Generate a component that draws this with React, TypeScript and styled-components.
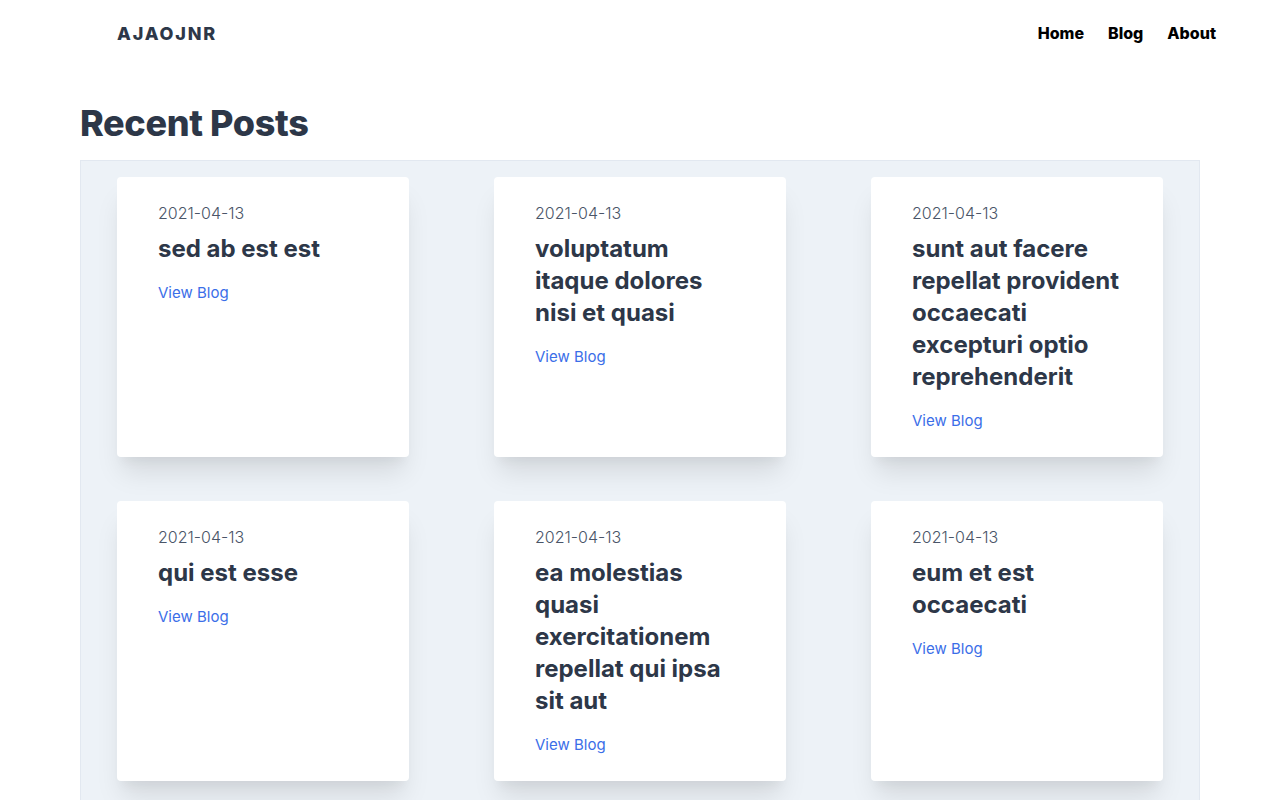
import React from "react";
import styled, { createGlobalStyle } from "styled-components";

const Global = createGlobalStyle`
  html, body { margin: 0; padding: 0; background: #fff; }
  body { font-family: Inter, "Noto Sans", sans-serif; -webkit-font-smoothing: antialiased; }
  * { box-sizing: border-box; }
`;

const Header = styled.header`
  display: flex;
  align-items: center;
  justify-content: space-between;
  height: 66px;
  padding: 0 64px 0 117px;
`;

const Logo = styled.a`
  font-size: 18px;
  font-weight: 800;
  letter-spacing: 0.1em;
  color: #2d3748;
  text-decoration: none;
`;

const Nav = styled.nav`
  display: flex;
  gap: 24px;
`;

const NavLink = styled.a`
  font-size: 16px;
  font-weight: 800;
  color: #000;
  text-decoration: none;
`;

const Main = styled.main`
  width: 1120px;
  margin: 0 auto;
`;

const Heading = styled.h1`
  margin: 37px 0 17px;
  font-size: 36px;
  line-height: 40px;
  font-weight: 800;
  color: #2d3748;
  letter-spacing: -0.01em;
`;

const Grid = styled.section`
  display: grid;
  grid-template-columns: repeat(3, 292px);
  column-gap: 85px;
  row-gap: 44px;
  padding: 16px 36px 40px;
  background: #edf2f7;
  border: 1px solid #e2e8f0;
`;

const Card = styled.article`
  background: #fff;
  border-radius: 4px;
  padding: 24px 40px 24px 41px;
  box-shadow: 0 20px 25px -5px rgba(0, 0, 0, 0.1), 0 10px 10px -5px rgba(0, 0, 0, 0.04);
`;

const Date = styled.div`
  font-size: 16px;
  line-height: 24px;
  color: #4a5568;
  font-weight: 300;
`;

const Title = styled.h2`
  margin: 8px 0 16px;
  font-size: 24px;
  line-height: 32px;
  font-weight: 700;
  color: #2d3748;
`;

const ViewLink = styled.a`
  display: block;
  font-size: 15px;
  line-height: 24px;
  font-weight: 400;
  color: #3b6ee8;
  text-decoration: none;
`;

const posts = [
  "sed ab est est",
  "voluptatum itaque dolores nisi et quasi",
  "sunt aut facere repellat provident occaecati excepturi optio reprehenderit",
  "qui est esse",
  "ea molestias quasi exercitationem repellat qui ipsa sit aut",
  "eum et est occaecati",
];

export default function App() {
  return (
    <>
      <Global />
      <Header>
        <Logo href="#">AJAOJNR</Logo>
        <Nav>
          <NavLink href="#">Home</NavLink>
          <NavLink href="#">Blog</NavLink>
          <NavLink href="#">About</NavLink>
        </Nav>
      </Header>
      <Main>
        <Heading>Recent Posts</Heading>
        <Grid>
          {posts.map((t) => (
            <Card key={t}>
              <Date>2021-04-13</Date>
              <Title>{t}</Title>
              <ViewLink href="#">View Blog</ViewLink>
            </Card>
          ))}
        </Grid>
      </Main>
    </>
  );
}
